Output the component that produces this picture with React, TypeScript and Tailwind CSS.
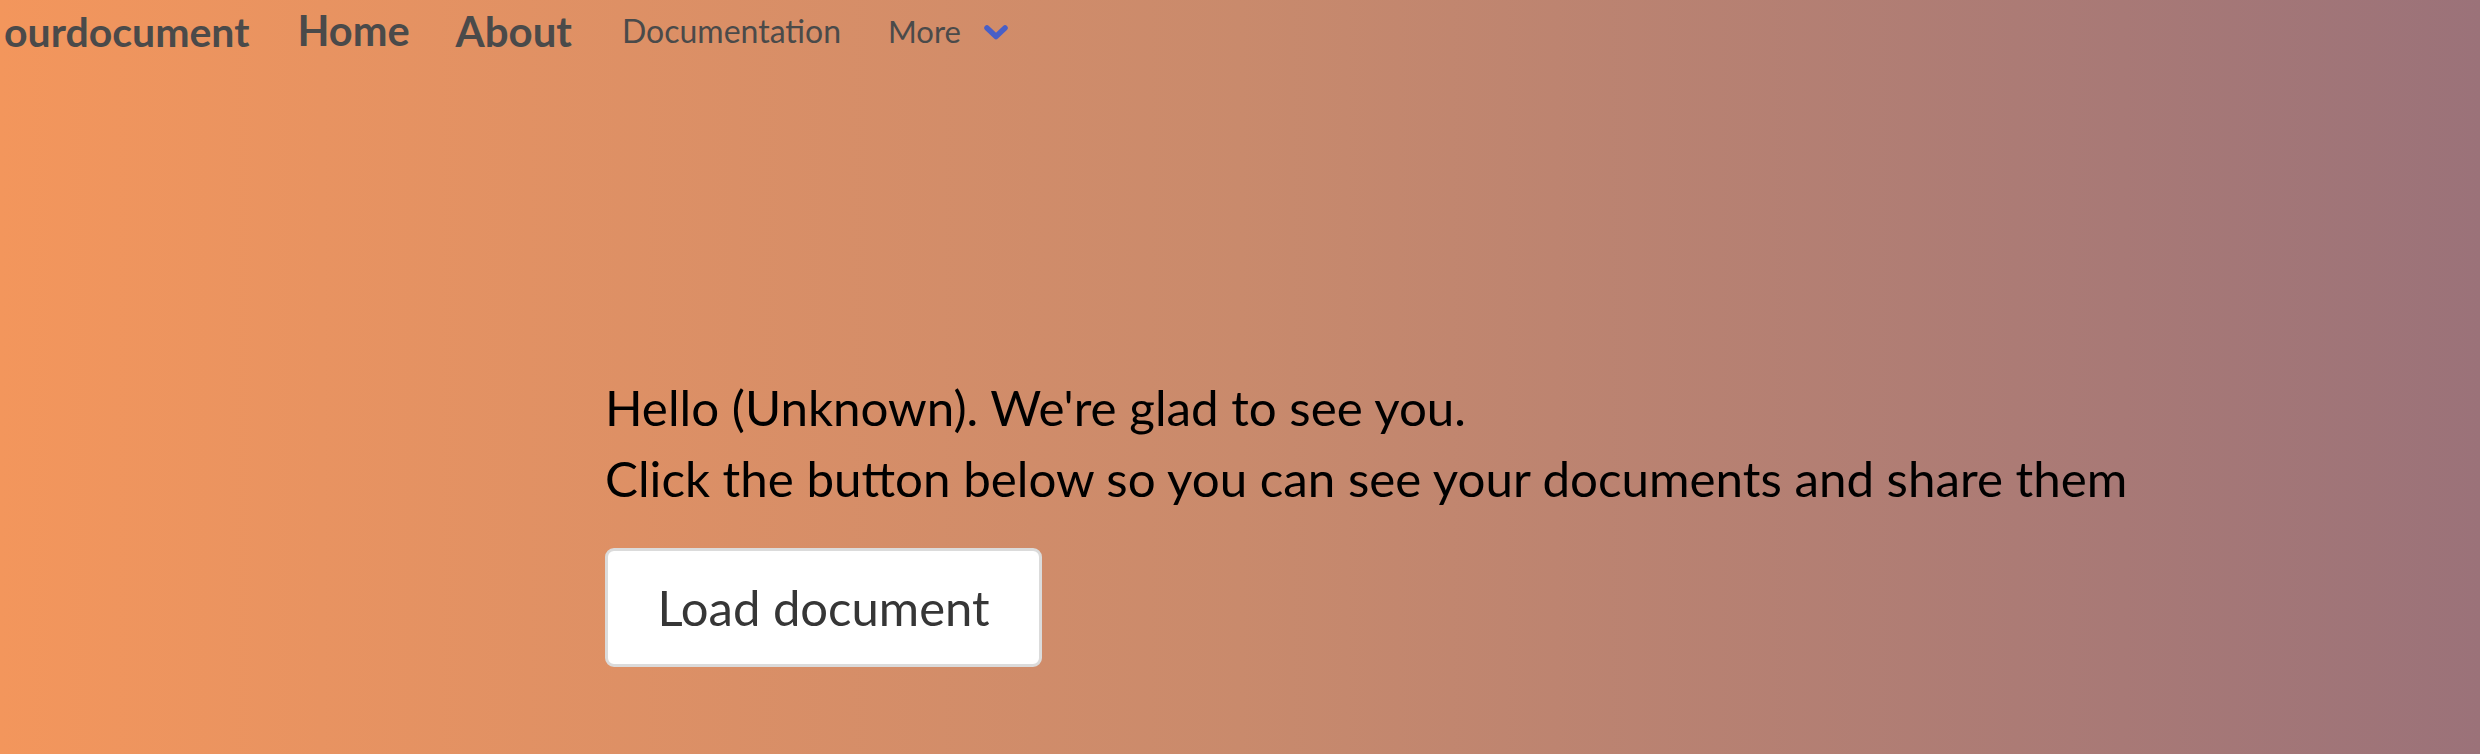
import React from "react";

export default function App() {
  return (
    <div
      className="w-[2480px] h-[754px] overflow-hidden bg-gradient-to-r from-[#f3965c] via-[#c98a6c] to-[#9b7279] text-black"
      style={{ fontFamily: "Lato, 'Open Sans', sans-serif" }}
    >
      <nav className="h-[62px] flex items-center pl-[4px] text-[#4a4a4a]">
        <span className="text-[41px] font-bold leading-none">ourdocument</span>
        <span className="ml-[48px] text-[41.5px] font-bold leading-none">Home</span>
        <span className="ml-[46px] text-[42px] font-bold leading-none">About</span>
        <span className="ml-[50px] text-[32px] leading-none">Documentation</span>
        <span className="ml-[47px] flex items-center gap-[22px] text-[31px] leading-none">
          More
          <svg width="26" height="18" viewBox="0 0 26 18" className="mt-[2px]">
            <path d="M4 5 L13 13.5 L22 5" fill="none" stroke="#485fc7" strokeWidth="5.5" strokeLinecap="round" strokeLinejoin="round" />
          </svg>
        </span>
      </nav>
      <main className="pl-[605px] pt-[310px]">
        <p className="text-[49.3px] leading-[71px]">Hello (Unknown). We're glad to see you.</p>
        <p className="text-[49.3px] leading-[71px]">Click the button below so you can see your documents and share them</p>
        <button className="mt-[34px] w-[437px] h-[119px] bg-white border-[3px] border-[#dbdbdb] rounded-[9px] text-[#363636] text-[49px] flex items-center justify-center">
          Load document
        </button>
      </main>
    </div>
  );
}
